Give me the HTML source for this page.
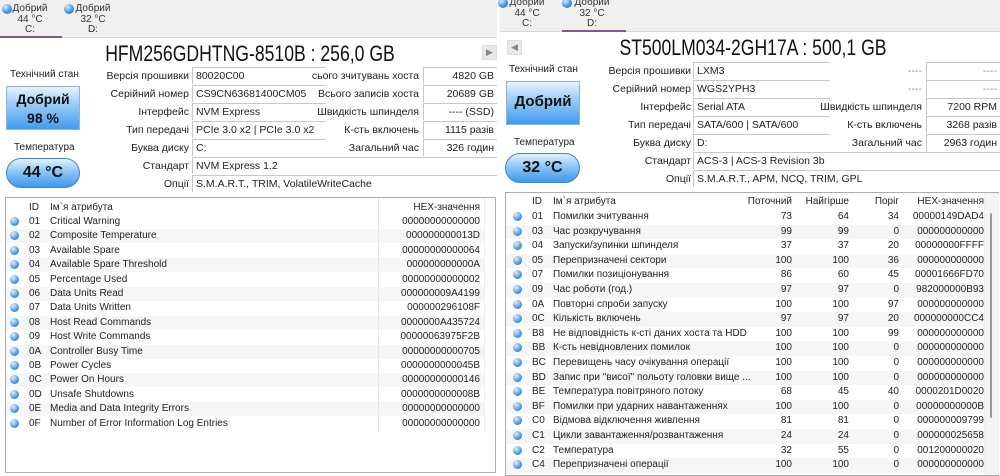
<!DOCTYPE html>
<html><head><meta charset="utf-8"><style>
*{margin:0;padding:0;box-sizing:border-box}
body{width:1000px;height:476px;background:#fff;position:relative;overflow:hidden;font-family:"Liberation Sans","DejaVu Sans",sans-serif;font-size:10.5px;color:#222}
.a{position:absolute;white-space:nowrap}
.tabbar{position:absolute;background:#f0f0f0;border-bottom:1px solid #d6d6d6}
.tab{position:absolute;text-align:center;line-height:10.5px;font-size:10px;color:#333;white-space:nowrap}
.dot{position:absolute;width:10px;height:10px;border-radius:50%;background:radial-gradient(circle at 35% 30%,#d8ecff,#3b8fe0 60%,#1f66b8)}
.title{position:absolute;font-size:22px;color:#111;text-align:center;white-space:nowrap;transform:scaleX(0.8);transform-origin:center}
.lbl{position:absolute;text-align:right;font-size:10.5px;color:#222;white-space:nowrap}
.val{position:absolute;border-top:1px solid #c8c8c8;border-left:1px solid #c8c8c8;padding-left:3px;font-size:10.5px;height:17px;line-height:16px;background:#fff;white-space:nowrap;overflow:hidden}
.val.r{text-align:right;padding-right:3px}
.health{position:absolute;border:1px solid #8fb4dc;background:linear-gradient(#e8f3fe 0%,#9ccdf7 40%,#3f9cee 100%);text-align:center;font-weight:bold;color:#111}
.temp{position:absolute;border:1px solid #3f86d2;border-radius:15px;background:linear-gradient(#e3f1fd 0%,#8cc6f5 45%,#3d98ec 100%);text-align:center;font-weight:bold;font-size:16px;color:#111}
.btn{position:absolute;width:15px;height:15px;background:#e8e8e8;border:1px solid #ddd;color:#888;font-size:9px;text-align:center;line-height:13px}
.tbl{position:absolute;border:1px solid #adadad;background:#fff}
.row{position:absolute;left:0;font-size:10px;color:#222;line-height:14px}
.row.s{background:#f6f6f6}
.row span{position:absolute;top:0;white-space:nowrap}
.row span.d{width:9px;height:9px;border-radius:50%;background:radial-gradient(circle at 35% 30%,#e0f0ff,#4a98e4 60%,#2468b8);top:2px}
</style></head><body>

<!-- LEFT PANEL -->
<div class="tabbar" style="left:0;top:0;width:497px;height:38px"></div>
<div class="dot" style="left:2px;top:4px"></div>
<div class="tab" style="left:10px;top:4px;width:40px">Добрий<br>44 °C<br>C:</div>
<div class="dot" style="left:64px;top:4px"></div>
<div class="tab" style="left:73px;top:4px;width:40px">Добрий<br>32 °C<br>D:</div>
<div class="a" style="left:0;top:36px;width:62px;height:2px;background:#7a5c8c"></div>

<div class="title" style="left:60px;top:41px;width:380px">HFM256GDHTNG-8510B : 256,0 GB</div>
<div class="btn" style="left:482px;top:45px">&#9654;</div>

<div class="a" style="left:10px;top:69px;font-size:10px">Технічний стан</div>
<div class="health" style="left:6px;top:86px;width:74px;height:44px;font-size:14px;line-height:19px;padding-top:3px">Добрий<br>98 %</div>
<div class="a" style="left:14px;top:142px;font-size:10px">Температура</div>
<div class="temp" style="left:6px;top:158px;width:74px;height:30px;line-height:28px">44 °C</div>

<div class="lbl" style="right:811px;top:70px">Версія прошивки</div>
<div class="val" style="left:192px;top:67px;width:134px">80020C00</div>
<div class="lbl" style="right:811px;top:88px">Серійний номер</div>
<div class="val" style="left:192px;top:85px;width:134px">CS9CN63681400CM05</div>
<div class="lbl" style="right:811px;top:106px">Інтерфейс</div>
<div class="val" style="left:192px;top:103px;width:134px">NVM Express</div>
<div class="lbl" style="right:811px;top:124px">Тип передачі</div>
<div class="val" style="left:192px;top:121px;width:134px">PCIe 3.0 x2 | PCIe 3.0 x2</div>
<div class="lbl" style="right:811px;top:142px">Буква диску</div>
<div class="val" style="left:192px;top:139px;width:134px">C:</div>
<div class="lbl" style="right:811px;top:160px">Стандарт</div>
<div class="val" style="left:192px;top:157px;width:305px">NVM Express 1.2</div>
<div class="lbl" style="right:811px;top:178px">Опції</div>
<div class="val" style="left:192px;top:175px;width:305px">S.M.A.R.T., TRIM, VolatileWriteCache</div>

<div class="lbl" style="right:581px;top:70px">сього зчитувань хоста</div>
<div class="val r" style="left:423px;top:67px;width:74px">4820 GB</div>
<div class="lbl" style="right:581px;top:88px">Всього записів хоста</div>
<div class="val r" style="left:423px;top:85px;width:74px">20689 GB</div>
<div class="lbl" style="right:581px;top:106px">Швидкість шпинделя</div>
<div class="val r" style="left:423px;top:103px;width:74px">---- (SSD)</div>
<div class="lbl" style="right:581px;top:124px">К-сть включень</div>
<div class="val r" style="left:423px;top:121px;width:74px">1115 разів</div>
<div class="lbl" style="right:581px;top:142px">Загальний час</div>
<div class="val r" style="left:423px;top:139px;width:74px">326 годин</div>

<div class="tbl" style="left:5px;top:197px;width:491px;height:276px">
<div class="row" style="top:3px;height:14px;width:478px"><span style="left:23px">ID</span><span style="left:44px">Ім`я атрибута</span><span style="right:4px">HEX-значення</span></div>
<div class="row" style="top:17px;height:14px;width:478px"><span class="d" style="left:4px"></span><span style="left:23px">01</span><span style="left:44px">Critical Warning</span><span style="right:4px">00000000000000</span></div>
<div class="row s" style="top:31.4px;height:14px;width:478px"><span class="d" style="left:4px"></span><span style="left:23px">02</span><span style="left:44px">Composite Temperature</span><span style="right:4px">000000000013D</span></div>
<div class="row" style="top:45.8px;height:14px;width:478px"><span class="d" style="left:4px"></span><span style="left:23px">03</span><span style="left:44px">Available Spare</span><span style="right:4px">00000000000064</span></div>
<div class="row s" style="top:60.2px;height:14px;width:478px"><span class="d" style="left:4px"></span><span style="left:23px">04</span><span style="left:44px">Available Spare Threshold</span><span style="right:4px">000000000000A</span></div>
<div class="row" style="top:74.6px;height:14px;width:478px"><span class="d" style="left:4px"></span><span style="left:23px">05</span><span style="left:44px">Percentage Used</span><span style="right:4px">00000000000002</span></div>
<div class="row s" style="top:89px;height:14px;width:478px"><span class="d" style="left:4px"></span><span style="left:23px">06</span><span style="left:44px">Data Units Read</span><span style="right:4px">000000009A4199</span></div>
<div class="row" style="top:103.4px;height:14px;width:478px"><span class="d" style="left:4px"></span><span style="left:23px">07</span><span style="left:44px">Data Units Written</span><span style="right:4px">000000296108F</span></div>
<div class="row s" style="top:117.8px;height:14px;width:478px"><span class="d" style="left:4px"></span><span style="left:23px">08</span><span style="left:44px">Host Read Commands</span><span style="right:4px">0000000A435724</span></div>
<div class="row" style="top:132.2px;height:14px;width:478px"><span class="d" style="left:4px"></span><span style="left:23px">09</span><span style="left:44px">Host Write Commands</span><span style="right:4px">00000063975F2B</span></div>
<div class="row s" style="top:146.6px;height:14px;width:478px"><span class="d" style="left:4px"></span><span style="left:23px">0A</span><span style="left:44px">Controller Busy Time</span><span style="right:4px">00000000000705</span></div>
<div class="row" style="top:161px;height:14px;width:478px"><span class="d" style="left:4px"></span><span style="left:23px">0B</span><span style="left:44px">Power Cycles</span><span style="right:4px">0000000000045B</span></div>
<div class="row s" style="top:175.4px;height:14px;width:478px"><span class="d" style="left:4px"></span><span style="left:23px">0C</span><span style="left:44px">Power On Hours</span><span style="right:4px">00000000000146</span></div>
<div class="row" style="top:189.8px;height:14px;width:478px"><span class="d" style="left:4px"></span><span style="left:23px">0D</span><span style="left:44px">Unsafe Shutdowns</span><span style="right:4px">0000000000008B</span></div>
<div class="row s" style="top:204.2px;height:14px;width:478px"><span class="d" style="left:4px"></span><span style="left:23px">0E</span><span style="left:44px">Media and Data Integrity Errors</span><span style="right:4px">00000000000000</span></div>
<div class="row" style="top:218.6px;height:14px;width:478px"><span class="d" style="left:4px"></span><span style="left:23px">0F</span><span style="left:44px">Number of Error Information Log Entries</span><span style="right:4px">00000000000000</span></div>
<div class="a" style="left:372px;top:0;width:1px;height:234px;background:#e6e6e6"></div>
<div class="a" style="left:478px;top:0;width:1px;height:234px;background:#eee"></div>
</div>

<!-- RIGHT PANEL -->
<div class="tabbar" style="left:500px;top:0;width:500px;height:32px"></div>
<div class="dot" style="left:498px;top:-2px"></div>
<div class="tab" style="left:507px;top:-2px;width:40px">Добрий<br>44 °C<br>C:</div>
<div class="dot" style="left:562px;top:-2px"></div>
<div class="tab" style="left:572px;top:-2px;width:40px">Добрий<br>32 °C<br>D:</div>
<div class="a" style="left:562px;top:30px;width:64px;height:2px;background:#7a5c8c"></div>

<div class="btn" style="left:507px;top:40px">&#9664;</div>
<div class="title" style="left:568px;top:35px;width:370px;font-size:22px">ST500LM034-2GH17A : 500,1 GB</div>

<div class="a" style="left:509px;top:64px;font-size:10px">Технічний стан</div>
<div class="health" style="left:506px;top:81px;width:74px;height:44px;font-size:15px;line-height:40px">Добрий</div>
<div class="a" style="left:514px;top:137px;font-size:10px">Температура</div>
<div class="temp" style="left:505px;top:153px;width:75px;height:30px;line-height:28px">32 °C</div>

<div class="lbl" style="right:309px;top:65px">Версія прошивки</div>
<div class="val" style="left:693px;top:62px;width:137px">LXM3</div>
<div class="lbl" style="right:309px;top:83px">Серійний номер</div>
<div class="val" style="left:693px;top:80px;width:137px">WGS2YPH3</div>
<div class="lbl" style="right:309px;top:101px">Інтерфейс</div>
<div class="val" style="left:693px;top:98px;width:137px">Serial ATA</div>
<div class="lbl" style="right:309px;top:119px">Тип передачі</div>
<div class="val" style="left:693px;top:116px;width:137px">SATA/600 | SATA/600</div>
<div class="lbl" style="right:309px;top:137px">Буква диску</div>
<div class="val" style="left:693px;top:134px;width:137px">D:</div>
<div class="lbl" style="right:309px;top:155px">Стандарт</div>
<div class="val" style="left:693px;top:152px;width:307px">ACS-3 | ACS-3 Revision 3b</div>
<div class="lbl" style="right:309px;top:173px">Опції</div>
<div class="val" style="left:693px;top:170px;width:307px">S.M.A.R.T., APM, NCQ, TRIM, GPL</div>

<div class="lbl" style="right:78px;top:65px;color:#888">----</div>
<div class="val r" style="left:926px;top:62px;width:74px;color:#888">----</div>
<div class="lbl" style="right:78px;top:83px;color:#888">----</div>
<div class="val r" style="left:926px;top:80px;width:74px;color:#888">----</div>
<div class="lbl" style="right:78px;top:101px">Швидкість шпинделя</div>
<div class="val r" style="left:926px;top:98px;width:74px">7200 RPM</div>
<div class="lbl" style="right:78px;top:119px">К-сть включень</div>
<div class="val r" style="left:926px;top:116px;width:74px">3268 разів</div>
<div class="lbl" style="right:78px;top:137px">Загальний час</div>
<div class="val r" style="left:926px;top:134px;width:74px">2963 годин</div>

<div class="tbl" style="left:505px;top:192px;width:494px;height:284px">
<div class="row" style="top:2px;height:14px;width:478px"><span style="left:26px">ID</span><span style="left:47px">Ім`я атрибута</span><span style="right:192px">Поточний</span><span style="right:135px">Найгірше</span><span style="right:85px">Поріг</span><span style="right:0px">HEX-значення</span></div>
<div class="row" style="top:17px;height:14.6px;width:478px"><span class="d" style="left:7px"></span><span style="left:26px">01</span><span style="left:47px">Помилки зчитування</span><span style="right:192px">73</span><span style="right:135px">64</span><span style="right:85px">34</span><span style="right:0px">00000149DAD4</span></div>
<div class="row s" style="top:31.6px;height:14.6px;width:478px"><span class="d" style="left:7px"></span><span style="left:26px">03</span><span style="left:47px">Час розкручування</span><span style="right:192px">99</span><span style="right:135px">99</span><span style="right:85px">0</span><span style="right:0px">000000000000</span></div>
<div class="row" style="top:46.2px;height:14.6px;width:478px"><span class="d" style="left:7px"></span><span style="left:26px">04</span><span style="left:47px">Запуски/зупинки шпинделя</span><span style="right:192px">37</span><span style="right:135px">37</span><span style="right:85px">20</span><span style="right:0px">00000000FFFF</span></div>
<div class="row s" style="top:60.8px;height:14.6px;width:478px"><span class="d" style="left:7px"></span><span style="left:26px">05</span><span style="left:47px">Перепризначені сектори</span><span style="right:192px">100</span><span style="right:135px">100</span><span style="right:85px">36</span><span style="right:0px">000000000000</span></div>
<div class="row" style="top:75.4px;height:14.6px;width:478px"><span class="d" style="left:7px"></span><span style="left:26px">07</span><span style="left:47px">Помилки позиціонування</span><span style="right:192px">86</span><span style="right:135px">60</span><span style="right:85px">45</span><span style="right:0px">00001666FD70</span></div>
<div class="row s" style="top:90px;height:14.6px;width:478px"><span class="d" style="left:7px"></span><span style="left:26px">09</span><span style="left:47px">Час роботи (год.)</span><span style="right:192px">97</span><span style="right:135px">97</span><span style="right:85px">0</span><span style="right:0px">982000000B93</span></div>
<div class="row" style="top:104.6px;height:14.6px;width:478px"><span class="d" style="left:7px"></span><span style="left:26px">0A</span><span style="left:47px">Повторні спроби запуску</span><span style="right:192px">100</span><span style="right:135px">100</span><span style="right:85px">97</span><span style="right:0px">000000000000</span></div>
<div class="row s" style="top:119.2px;height:14.6px;width:478px"><span class="d" style="left:7px"></span><span style="left:26px">0C</span><span style="left:47px">Кількість включень</span><span style="right:192px">97</span><span style="right:135px">97</span><span style="right:85px">20</span><span style="right:0px">000000000CC4</span></div>
<div class="row" style="top:133.8px;height:14.6px;width:478px"><span class="d" style="left:7px"></span><span style="left:26px">B8</span><span style="left:47px">Не відповідність к-сті даних хоста та HDD</span><span style="right:192px">100</span><span style="right:135px">100</span><span style="right:85px">99</span><span style="right:0px">000000000000</span></div>
<div class="row s" style="top:148.4px;height:14.6px;width:478px"><span class="d" style="left:7px"></span><span style="left:26px">BB</span><span style="left:47px">К-сть невідновлених помилок</span><span style="right:192px">100</span><span style="right:135px">100</span><span style="right:85px">0</span><span style="right:0px">000000000000</span></div>
<div class="row" style="top:163px;height:14.6px;width:478px"><span class="d" style="left:7px"></span><span style="left:26px">BC</span><span style="left:47px">Перевищень часу очікування операції</span><span style="right:192px">100</span><span style="right:135px">100</span><span style="right:85px">0</span><span style="right:0px">000000000000</span></div>
<div class="row s" style="top:177.6px;height:14.6px;width:478px"><span class="d" style="left:7px"></span><span style="left:26px">BD</span><span style="left:47px">Запис при "висої" польоту головки вище ...</span><span style="right:192px">100</span><span style="right:135px">100</span><span style="right:85px">0</span><span style="right:0px">000000000000</span></div>
<div class="row" style="top:192.2px;height:14.6px;width:478px"><span class="d" style="left:7px"></span><span style="left:26px">BE</span><span style="left:47px">Температура повітряного потоку</span><span style="right:192px">68</span><span style="right:135px">45</span><span style="right:85px">40</span><span style="right:0px">0000201D0020</span></div>
<div class="row s" style="top:206.8px;height:14.6px;width:478px"><span class="d" style="left:7px"></span><span style="left:26px">BF</span><span style="left:47px">Помилки при ударних навантаженнях</span><span style="right:192px">100</span><span style="right:135px">100</span><span style="right:85px">0</span><span style="right:0px">00000000000B</span></div>
<div class="row" style="top:221.4px;height:14.6px;width:478px"><span class="d" style="left:7px"></span><span style="left:26px">C0</span><span style="left:47px">Відмова відключення живлення</span><span style="right:192px">81</span><span style="right:135px">81</span><span style="right:85px">0</span><span style="right:0px">000000009799</span></div>
<div class="row s" style="top:236px;height:14.6px;width:478px"><span class="d" style="left:7px"></span><span style="left:26px">C1</span><span style="left:47px">Цикли завантаження/розвантаження</span><span style="right:192px">24</span><span style="right:135px">24</span><span style="right:85px">0</span><span style="right:0px">000000025658</span></div>
<div class="row" style="top:250.6px;height:14.6px;width:478px"><span class="d" style="left:7px"></span><span style="left:26px">C2</span><span style="left:47px">Температура</span><span style="right:192px">32</span><span style="right:135px">55</span><span style="right:85px">0</span><span style="right:0px">001200000020</span></div>
<div class="row s" style="top:265.2px;height:14.6px;width:478px"><span class="d" style="left:7px"></span><span style="left:26px">C4</span><span style="left:47px">Перепризначені операції</span><span style="right:192px">100</span><span style="right:135px">100</span><span style="right:85px">0</span><span style="right:0px">000000000000</span></div>
<div class="a" style="left:478px;top:0;width:15px;height:282px;background:#f4f4f4;border-left:1px solid #eee"></div>
<div class="a" style="left:484px;top:20px;width:2px;height:205px;background:#999;border-radius:1px"></div>
</div>
</body></html>
